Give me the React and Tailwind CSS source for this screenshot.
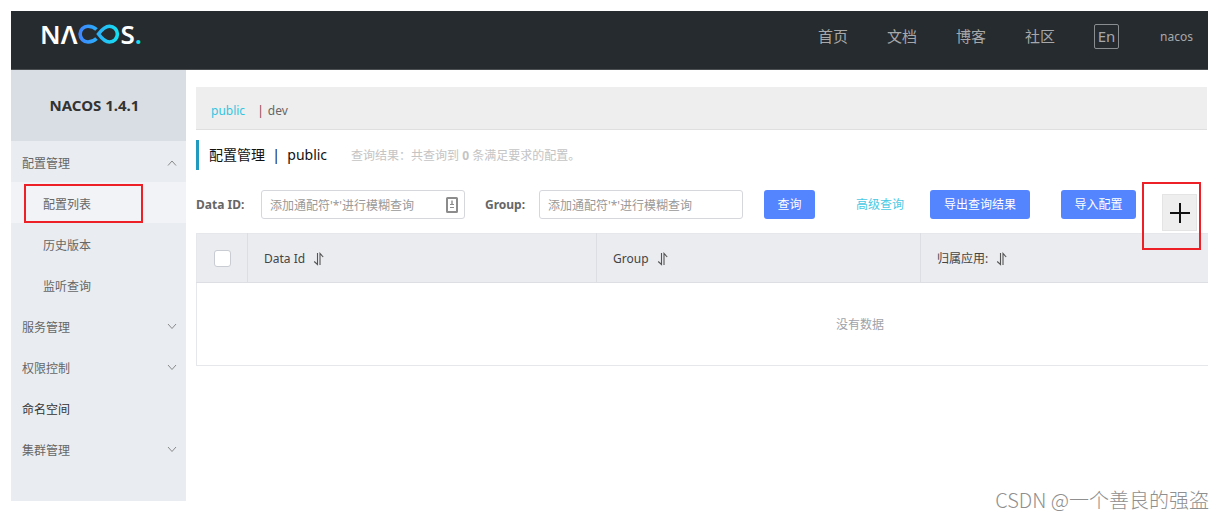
import { useState } from 'react';

const navLinks = ['首页', '文档', '博客', '社区'];

const menu = [
  {
    label: '配置管理',
    open: true,
    children: ['配置列表', '历史版本', '监听查询'],
  },
  { label: '服务管理', children: [] },
  { label: '权限控制', children: [] },
  { label: '命名空间' },
  { label: '集群管理', children: [] },
];

function Chevron({ up }) {
  return (
    <svg width="10" height="10" viewBox="0 0 10 10" fill="none" stroke="#888" strokeWidth="1">
      <path d={up ? 'M1 6.5 5 2l4 4.5' : 'M1 1 5 5.5 9 1'} />
    </svg>
  );
}

function SortIcon() {
  return (
    <svg width="11" height="14" viewBox="0 0 11 14" fill="none" stroke="#555" strokeWidth="1.1">
      <path d="M4.5 1v11.5L1.200 9.500" />
      <path d="M7 13V1.500l3.200 3.500" />
    </svg>
  );
}

function FillIcon() {
  return (
    <svg width="12" height="16" viewBox="0 0 12 16" fill="none" stroke="#8c8c8c">
      <rect x="1" y="1" width="10" height="14" rx="0.5" strokeWidth="2" />
      <path d="M6 3.5v4.5" strokeWidth="1.4" />
      <path d="M4 7.5h4M4 10.5h4" strokeWidth="1" />
    </svg>
  );
}

function Logo() {
  return (
    <a href="#" aria-label="NACOS" className="flex items-center pb-1 text-[26px] leading-6 font-semibold text-white">
      <span>N</span>
      <span>Λ</span>
      <svg className="ml-px" width="42" height="20" viewBox="0 0 42 20" fill="none" strokeWidth="3.6">
        <defs>
          <linearGradient id="loop" x1="0" y1="0" x2="42" y2="0" gradientUnits="userSpaceOnUse">
            <stop offset="0" stopColor="#3f82ff" />
            <stop offset="1" stopColor="#14e4f0" />
          </linearGradient>
        </defs>
        <path stroke="url(#loop)" d="M18.5 5.5C16.200 3.200 13.500 2.200 10 2.200a7.900 7.900 0 0 0 0 15.800c3.500 0 6.200-1.200 8.500-3.500" />
        <path
          stroke="url(#loop)"
          d="M20.500 10C24 5.200 27 2.200 31.500 2.200a7.900 7.900 0 0 1 0 15.800c-4.500 0-7.500-3.200-11-8z"
        />
      </svg>
      <span>S</span>
      <span className="text-[#14dfee]">.</span>
    </a>
  );
}

function Header() {
  return (
    <header className="flex h-[59px] items-center justify-between border-b border-[#4b4f52] bg-[#262b2f] pr-[15px] pb-2 pl-[29px]">
      <Logo />
      <nav className="flex items-center gap-[39px] text-[15px] text-[#a6a8aa]">
        {navLinks.map((link) => (
          <a key={link} href="#">{link}</a>
        ))}
        <button className="h-[25px] w-[25px] rounded-xs border border-[#8a8d8f] leading-5">En</button>
        <a href="#" className="pt-px pl-[2px] text-xs">nacos</a>
      </nav>
    </header>
  );
}

function Sidebar({ active, onSelect }) {
  return (
    <aside className="w-[175px] shrink-0 bg-[#e9edf1] pb-8">
      <h2 className="flex h-[71px] items-center justify-center bg-[#d9dee4] pr-2 text-[15px] font-bold text-[#333]">
        NACOS 1.4.1
      </h2>
      <ul className="text-xs text-[#666]">
        {menu.map((item) => (
          <li key={item.label}>
            <button
              className={`flex h-[41px] w-full items-center justify-between pt-1 pr-[9px] pl-[11px] ${item.children ? '' : 'text-[#333]'}`}
            >
              {item.label}
              {item.children && <Chevron up={item.open} />}
            </button>
            {item.open && (
              <ul>
                {item.children.map((child) => (
                  <li key={child} className={`relative ${active === child ? 'bg-[#f1f3f7]' : ''}`}>
                    <button className="h-[41px] w-full pt-1 pl-8 text-left" onClick={() => onSelect(child)}>
                      {child}
                    </button>
                    {active === child && (
                      <span className="pointer-events-none absolute top-[2px] left-[13px] h-[39px] w-[119px] border-2 border-[#ee2027]" />
                    )}
                  </li>
                ))}
              </ul>
            )}
          </li>
        ))}
      </ul>
    </aside>
  );
}

function SearchForm() {
  const inputClass =
    'h-[29px] w-[204px] rounded-[3px] border border-[#d5d7dd] bg-white px-2 pt-[2px] text-xs text-[#333] outline-none placeholder:text-[#999]';
  const buttonClass = 'h-[29px] rounded-[3px] bg-[#5584ff] pt-px text-xs text-white';
  const labelClass = 'leading-[30px] font-bold text-[#666]';

  return (
    <form className="mt-5 flex items-start text-xs" onSubmit={(e) => e.preventDefault()}>
      <label htmlFor="dataId" className={`${labelClass} w-[65px]`}>Data ID:</label>
      <div className="relative">
        <input id="dataId" className={inputClass} placeholder="添加通配符'*'进行模糊查询" />
        <span className="absolute top-[7px] right-[7px]">
          <FillIcon />
        </span>
      </div>
      <label htmlFor="group" className={`${labelClass} ml-5 w-[54px]`}>Group:</label>
      <input id="group" className={inputClass} placeholder="添加通配符'*'进行模糊查询" />
      <button className={`${buttonClass} ml-[21px] w-[51px]`}>查询</button>
      <a href="#" className="ml-[41px] leading-[30px] text-[#49c9e4]">高级查询</a>
      <button className={`${buttonClass} ml-[26px] w-[100px]`}>导出查询结果</button>
      <button className={`${buttonClass} ml-[31px] w-[75px]`}>导入配置</button>
      <div className="relative mt-1 mr-[10px] ml-auto">
        <button
          aria-label="新建配置"
          className="flex h-[37px] w-[35px] items-center justify-center border border-[#e4e4e4] bg-[#eee]"
        >
          <svg width="20" height="20" viewBox="0 0 20 20" stroke="#111" strokeWidth="2">
            <path d="M10 0v20M0 10h20" />
          </svg>
        </button>
        <span className="pointer-events-none absolute -top-3 -left-5 h-[68px] w-[59px] border-2 border-[#ee2027]" />
      </div>
    </form>
  );
}

function ConfigTable() {
  const th = 'border-l border-[#dcdee3] pt-px pl-4 text-left font-normal';

  return (
    <div className="mt-[2px] -mr-px overflow-hidden">
      <table className="w-[1328px] table-fixed border border-[#e6e7eb] text-xs text-[#444]">
        <thead>
          <tr className="h-[49px] border-b border-[#dcdee3] bg-[#ebecf0]">
            <th className="w-[51px]">
              <input
                type="checkbox"
                aria-label="全选"
                className="mx-auto block h-[17px] w-[17px] appearance-none rounded-[3px] border border-[#c9ccd3] bg-white"
              />
            </th>
            <th className={`${th} w-[349px]`}>
              <span className="flex items-center gap-2">Data Id <SortIcon /></span>
            </th>
            <th className={`${th} w-[324px]`}>
              <span className="flex items-center gap-2">Group <SortIcon /></span>
            </th>
            <th className={th}>
              <span className="flex items-center gap-2">归属应用: <SortIcon /></span>
            </th>
          </tr>
        </thead>
        <tbody>
          <tr>
            <td colSpan={4} className="h-[83px] pt-px text-center text-[#a0a2a8]">没有数据</td>
          </tr>
        </tbody>
      </table>
    </div>
  );
}

export default function App() {
  const [active, setActive] = useState('配置列表');

  return (
    <div className="relative bg-white pt-[11px] pr-[17px] pb-[17px] pl-[11px] font-['Noto_Sans','Noto_Sans_CJK_SC',sans-serif]">
      <Header />
      <div className="flex">
        <Sidebar active={active} onSelect={setActive} />
        <main className="min-w-0 flex-1 pt-[17px] pr-px pl-[10px]">
          <div className="flex h-[43px] items-center border-b border-[#dfdfdf] bg-[#eee] px-[15px] pt-[6px] text-xs text-[#666]">
            <a href="#" className="text-[#33c5e0]">public</a>
            <span className="mr-1 ml-3 text-[#8a4444]">|</span>
            <a href="#">dev</a>
          </div>
          <div className="mt-[10px] flex h-[30px] items-center border-l-[3px] border-[#209bbf] pl-[10px]">
            <h1 className="text-sm text-[#111]">配置管理&nbsp; |&nbsp; public</h1>
            <p className="ml-6 pt-[2px] text-xs text-[#c4c4c4]">
              查询结果：共查询到 <strong>0</strong> 条满足要求的配置。
            </p>
          </div>
          <SearchForm />
          <ConfigTable />
        </main>
      </div>
      <p className="absolute right-4 bottom-1 font-['Noto_Sans_CJK_SC',sans-serif] text-xl leading-7 font-light text-[#8f8f8f]">
        CSDN @一个善良的强盗
      </p>
    </div>
  );
}
